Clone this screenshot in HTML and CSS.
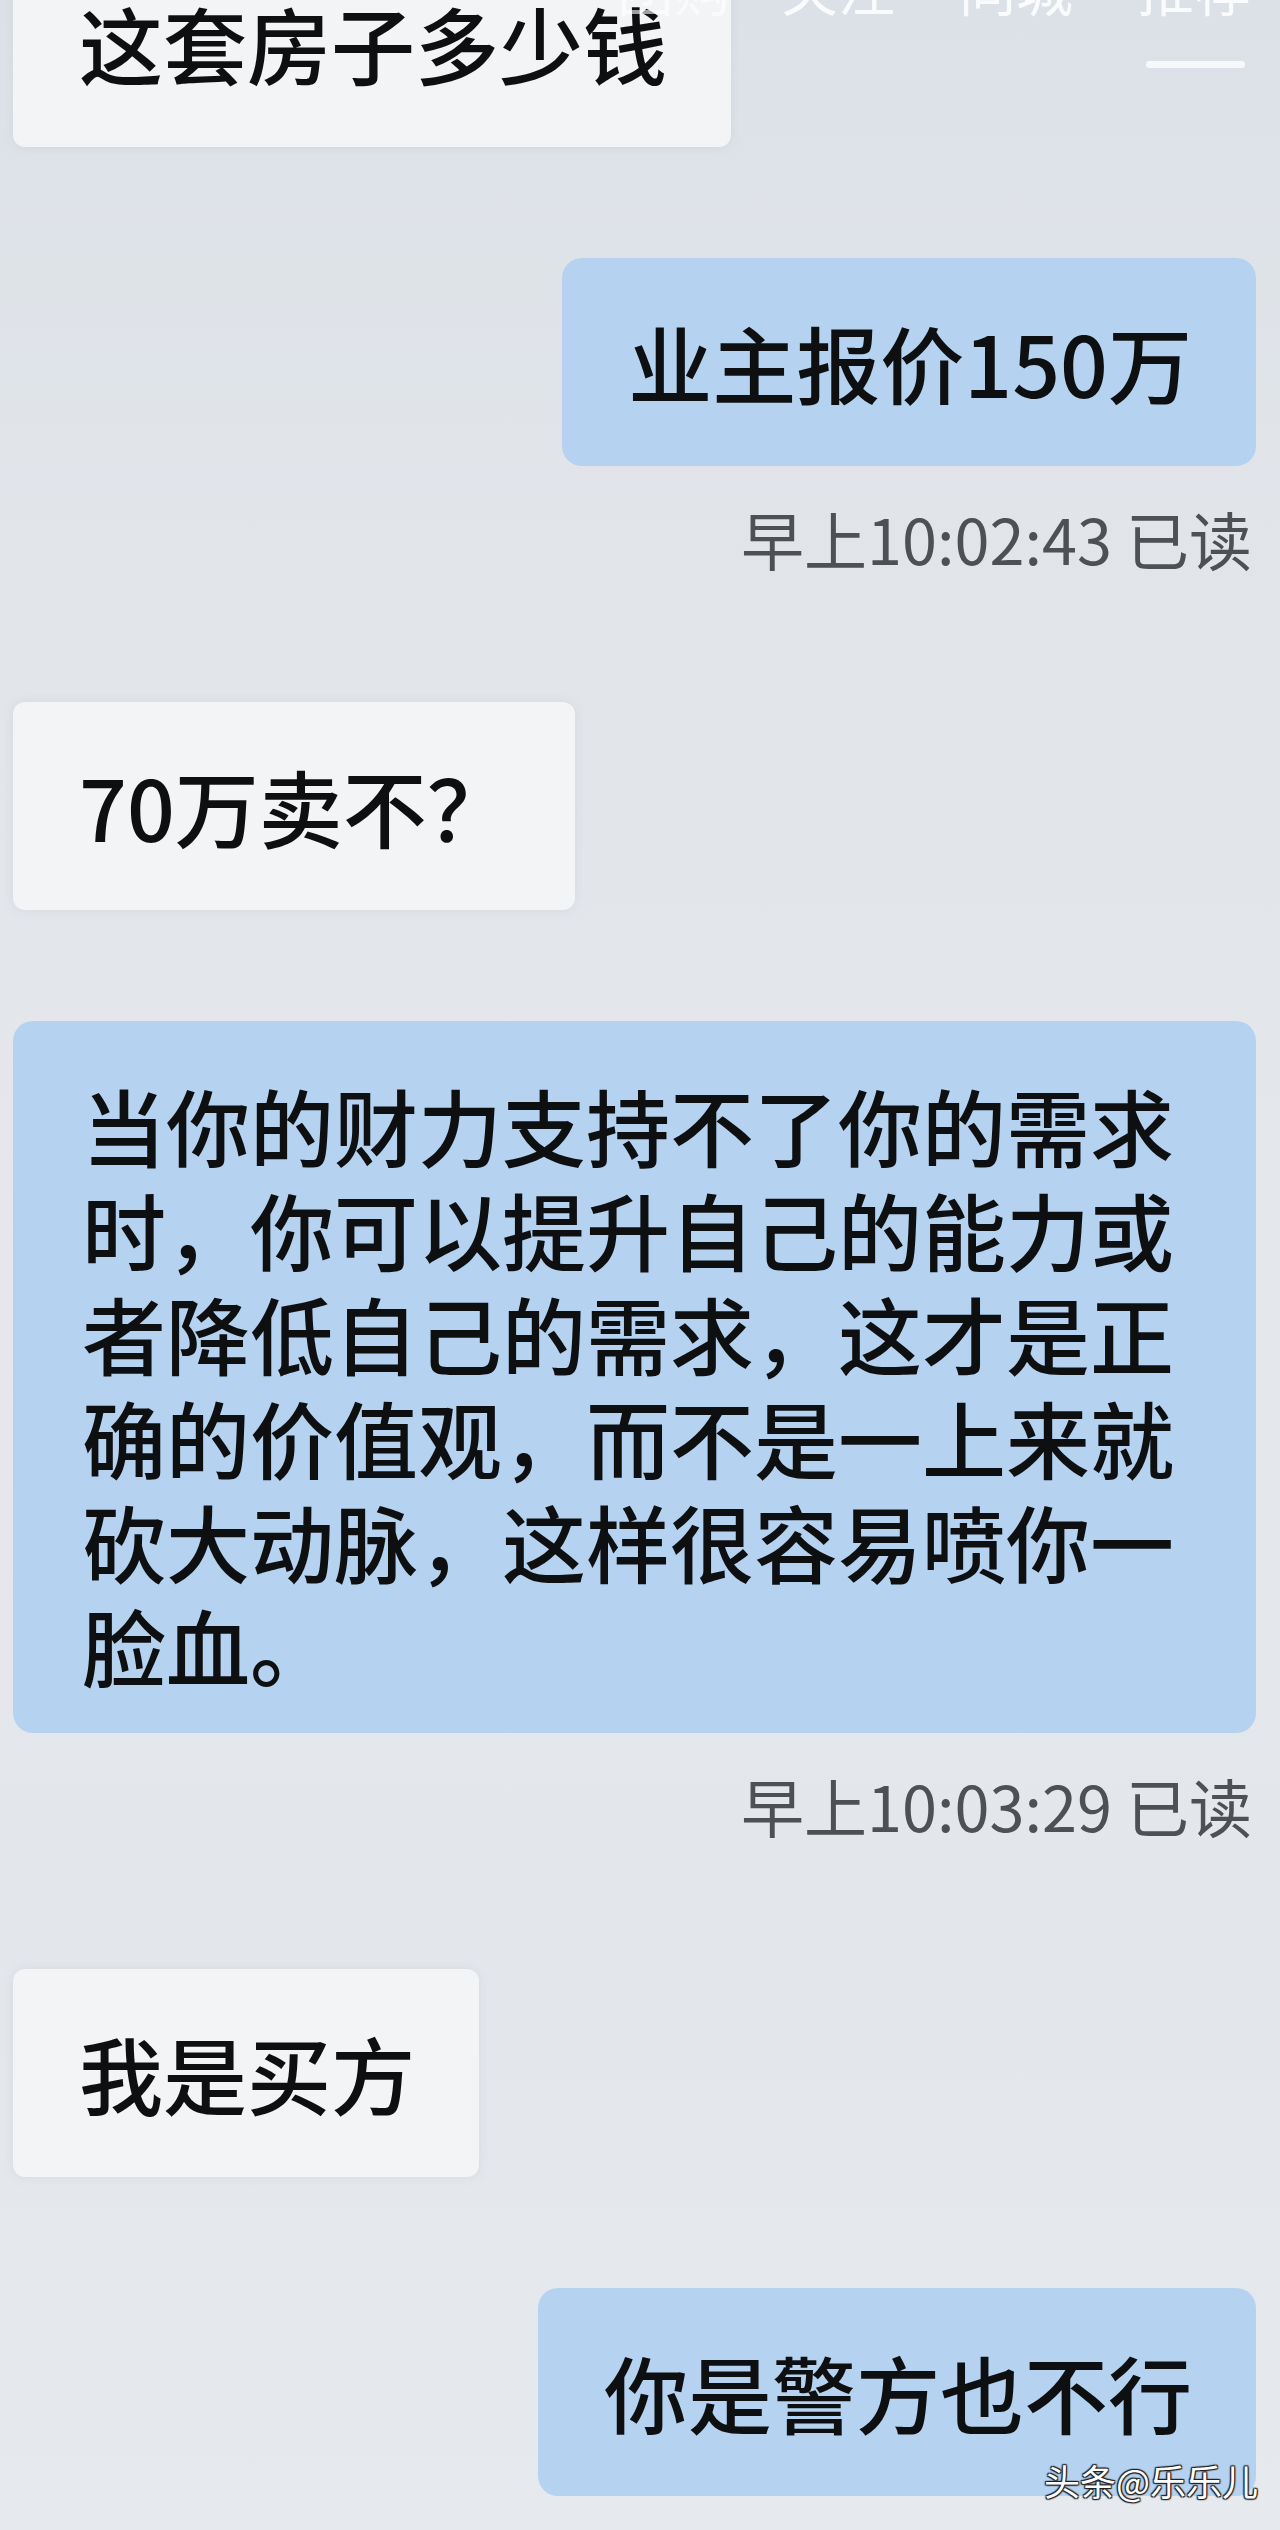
FILE: index.html
```html
<!DOCTYPE html>
<html lang="zh-CN">
<head>
<meta charset="utf-8">
<title>聊天记录</title>
<link rel="stylesheet" href="styles.css">
</head>
<body>
<div class="screen">
  <div class="tabs">
    <span class="tab shop">团购</span>
    <span class="tab">关注</span>
    <span class="tab">同城</span>
    <span class="tab active">推荐</span>
  </div>

  <div class="chat">
    <div class="row left first">
      <div class="bubble white">这套房子多少钱</div>
    </div>
    <div class="row right">
      <div class="bubble blue">业主报价150万</div>
    </div>
    <div class="ts">早上10:02:43 已读</div>
    <div class="row left after-ts">
      <div class="bubble white">70万卖不？</div>
    </div>
    <div class="row right">
      <div class="bubble blue long">当你的财力支持不了你的需求时，你可以提升自己的能力或者降低自己的需求，这才是正确的价值观，而不是一上来就砍大动脉，这样很容易喷你一脸血。</div>
    </div>
    <div class="ts">早上10:03:29 已读</div>
    <div class="row left after-ts">
      <div class="bubble white">我是买方</div>
    </div>
    <div class="row right">
      <div class="bubble blue">你是警方也不行</div>
    </div>
  </div>

  <div class="watermark">头条@乐乐儿</div>
</div>
</body>
</html>
```

FILE: styles.css
```css
html, body {
  margin: 0;
  padding: 0;
}

body {
  background: #e3e7ec;
  font-family: "Noto Sans CJK SC", "Noto Sans", sans-serif;
  color: #0e0f11;
}

.screen {
  position: relative;
  width: 1280px;
  height: 2530px;
  overflow: hidden;
  background: linear-gradient(180deg, #dce1e7 0%, #e1e5ea 20%, #e4e7ec 50%, #e3e7ec 80%, #e6e9ed 100%);
}

.chat {
  position: relative;
  display: flex;
  flex-direction: column;
  padding: 0 24px 0 13px;
  margin-top: -61px;
}

.row {
  display: flex;
  margin-top: 111px;
}

.row.first {
  margin-top: 0;
}

.row.after-ts {
  margin-top: 124px;
}

.row.left {
  justify-content: flex-start;
}

.row.right {
  justify-content: flex-end;
}

.bubble {
  font-size: 84px;
  line-height: 104px;
  font-weight: 500;
  padding: 52px 64px 52px 66px;
  box-sizing: border-box;
  max-width: 100%;
}

.bubble.white {
  background: #f2f4f6;
  border-radius: 12px;
  box-shadow: 0 0 8px rgba(200, 206, 214, 0.5);
}

.bubble.blue {
  background: #b5d3f0;
  border-radius: 20px;
}

.bubble.long {
  width: 100%;
  padding: 52px 60px 36px 69px;
}

.ts {
  margin-top: 32px;
  align-self: flex-end;
  padding-right: 4px;
  font-size: 63px;
  line-height: 80px;
  color: #4d5155;
}

.tabs {
  position: absolute;
  top: -42px;
  right: 29px;
  display: flex;
  gap: 64px;
  z-index: 2;
}

.tab {
  position: relative;
  font-size: 57px;
  line-height: 57px;
  color: rgba(255, 255, 255, 0.85);
}

.tab.shop {
  margin-right: -14px;
  color: rgba(255, 255, 255, 0.6);
}

.tab.active::after {
  content: "";
  position: absolute;
  left: 9px;
  right: 6px;
  top: 103px;
  height: 7px;
  border-radius: 3px;
  background: #f7f8fa;
}

.watermark {
  position: absolute;
  right: 22px;
  bottom: 30px;
  font-size: 36px;
  line-height: 40px;
  color: #ffffff;
  text-shadow: 0 0 2px #222, 1px 1px 1px #222, -1px -1px 1px #222, 1px -1px 1px #222, -1px 1px 1px #222;
}
```
